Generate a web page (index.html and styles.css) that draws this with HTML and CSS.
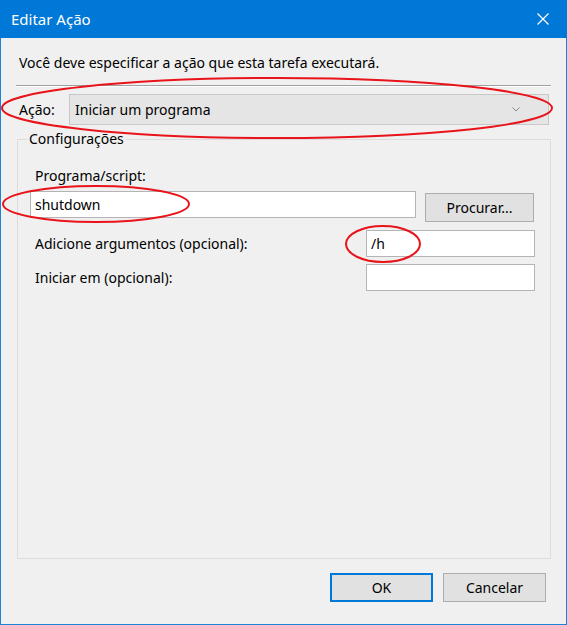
FILE: index.html
```html
<!DOCTYPE html>
<html lang="pt">
<head>
<meta charset="utf-8">
<link rel="stylesheet" href="styles.css">
</head>
<body>
<div class="window">
  <div class="titlebar">
    <span class="title">Editar Ação</span>
    <svg class="close" width="12" height="12" viewBox="0 0 12 12"><path d="M0.5 0.5 L11.5 11.5 M11.5 0.5 L0.5 11.5" stroke="#fff" stroke-width="1.2" fill="none"/></svg>
  </div>
  <div class="body">
    <p class="intro">Você deve especificar a ação que esta tarefa executará.</p>
    <div class="sep"></div>
    <div class="action-row">
      <span class="label">Ação:</span>
      <div class="select">
        <span>Iniciar um programa</span>
        <svg class="arrow" width="8" height="5" viewBox="0 0 8 5"><path d="M0.5 0.5 L4 4 L7.5 0.5" stroke="#888" stroke-width="1" fill="none"/></svg>
      </div>
    </div>
    <div class="group">
      <span class="legend">Configurações</span>
      <div class="field-label">Programa/script:</div>
      <div class="prog-row">
        <div class="input wide">shutdown</div>
        <div class="btn browse">Procurar...</div>
      </div>
      <div class="opt-row first">
        <span>Adicione argumentos (opcional):</span>
        <div class="input small">/h</div>
      </div>
      <div class="opt-row">
        <span>Iniciar em (opcional):</span>
        <div class="input small"></div>
      </div>
    </div>
    <div class="footer">
      <div class="btn primary">OK</div>
      <div class="btn">Cancelar</div>
    </div>
  </div>
  <svg class="marks" width="567" height="625" viewBox="0 0 567 625">
    <ellipse cx="277" cy="108" rx="275" ry="30" stroke="#e8141a" stroke-width="2" fill="none"/>
    <ellipse cx="96" cy="204" rx="93" ry="18" stroke="#e8141a" stroke-width="2" fill="none"/>
    <ellipse cx="383" cy="244" rx="37" ry="18" stroke="#e8141a" stroke-width="2" fill="none"/>
  </svg>
</div>
</body>
</html>
```
FILE: styles.css
```css
* { box-sizing: border-box; }
html, body { margin: 0; padding: 0; }
body {
  width: 567px;
  height: 625px;
  font-family: "Noto Sans", "DejaVu Sans", sans-serif;
  font-size: 14px;
  color: #000;
  overflow: hidden;
}
.window {
  position: relative;
  width: 567px;
  height: 625px;
  border: 1px solid #1883d7;
  border-top: none;
  background: #f0f0f0;
  display: flex;
  flex-direction: column;
}
.titlebar {
  height: 38px;
  margin: 0 -1px;
  background: #0078d7;
  color: #fff;
  display: flex;
  align-items: center;
  justify-content: space-between;
  padding: 0 18px 0 11px;
  flex: none;
}
.title { font-size: 15px; }
.close { display: block; }
.body {
  flex: 1;
  display: flex;
  flex-direction: column;
  padding: 0 15px 0 14px;
}
.intro {
  margin: 16px 0 0 4px;
  line-height: 18px;
}
.sep {
  margin-top: 13px;
  height: 2px;
  border-top: 1px solid #a0a0a0;
  border-bottom: 1px solid #fff;
  width: 535px;
  margin-left: 1px;
}
.action-row {
  display: flex;
  align-items: center;
  margin-top: 7px;
  height: 31px;
}
.label { margin-left: 4px; width: 50px; }
.select {
  width: 480px;
  height: 31px;
  background: #e5e5e5;
  border: 1px solid #c8c8c8;
  display: flex;
  align-items: center;
  justify-content: space-between;
  padding: 0 28px 0 5px;
}
.arrow { display: block; }
.group {
  margin: 14px 0 0 2px;
  width: 534px;
  height: 420px;
  border: 1px solid #dcdcdc;
  position: relative;
  padding: 27px 14px 0 12px;
}
.legend {
  position: absolute;
  top: -10px;
  left: 9px;
  padding: 0 2px;
  background: #f0f0f0;
  line-height: 18px;
}
.field-label { margin-left: 5px; line-height: 18px; }
.prog-row {
  display: flex;
  align-items: flex-start;
  margin-top: 6px;
}
.input {
  height: 27px;
  background: #fff;
  border: 1px solid #b4b4b4;
  padding: 0 4px;
  display: flex;
  align-items: center;
}
.wide { width: 386px; }
.small { width: 169px; }
.btn {
  height: 29px;
  background: #e1e1e1;
  border: 1px solid #adadad;
  display: flex;
  align-items: center;
  justify-content: center;
}
.browse { width: 109px; margin: 2px 0 0 9px; }
.opt-row {
  display: flex;
  align-items: center;
  justify-content: space-between;
  width: 505px;
  padding-left: 5px;
  margin-top: 7px;
}
.opt-row.first { margin-top: 8px; }
.footer {
  display: flex;
  justify-content: flex-end;
  gap: 10px;
  margin-top: 14px;
  padding-right: 5px;
}
.footer .btn { width: 103px; }
.primary { border: 2px solid #0078d7; }
.marks {
  position: absolute;
  left: -1px;
  top: 0;
  pointer-events: none;
}
```
